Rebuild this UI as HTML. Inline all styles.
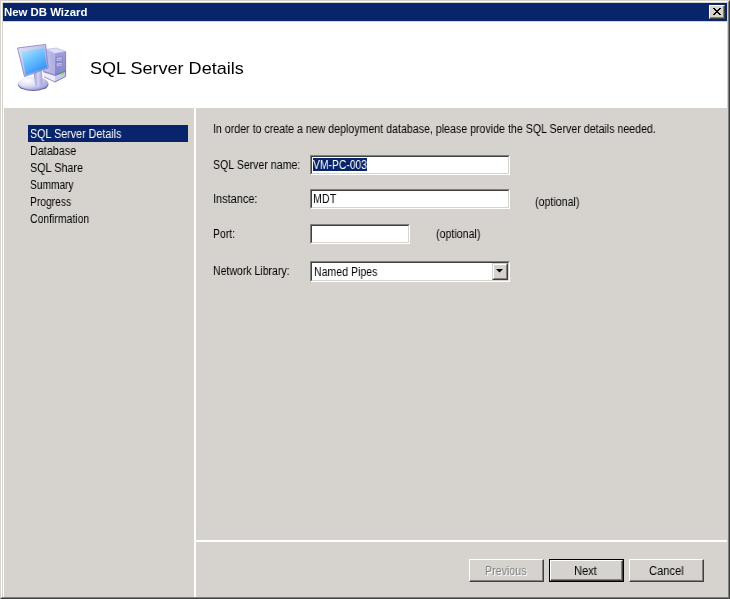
<!DOCTYPE html>
<html><head><meta charset="utf-8"><title>New DB Wizard</title>
<style>
html,body{margin:0;padding:0;}
body{width:730px;height:599px;position:relative;overflow:hidden;background:#d6d3ce;font-family:"Liberation Sans",sans-serif;font-size:12px;color:#000;}
.abs{position:absolute;}
.t{position:absolute;will-change:transform;white-space:nowrap;line-height:14px;transform-origin:0 0;font-size:12px;}
#frame1{left:0;top:0;width:728px;height:597px;border-left:1px solid #d6d3ce;border-top:1px solid #d6d3ce;border-right:1px solid #404040;border-bottom:1px solid #404040;}
#frame2{left:1px;top:1px;width:726px;height:595px;border-left:1px solid #fff;border-top:1px solid #fff;border-right:1px solid #808080;border-bottom:1px solid #808080;}
#title{left:3px;top:3px;width:724px;height:18px;background:#08246b;}
#close{left:706px;top:2px;width:16px;height:14px;background:#d6d3ce;box-sizing:border-box;border-left:1px solid #fff;border-top:1px solid #fff;border-right:1px solid #404040;border-bottom:1px solid #404040;}
#close i{position:absolute;left:0;top:0;right:0;bottom:0;border-right:1px solid #808080;border-bottom:1px solid #808080;}
#client{left:3px;top:22px;width:724px;height:575px;background:#fff;}
#side{left:4px;top:108px;width:190px;height:489px;background:#d6d3ce;}
#main{left:196px;top:108px;width:531px;height:489px;background:#d6d3ce;}
.inp{box-sizing:border-box;background:#fff;border-left:1px solid #808080;border-top:1px solid #808080;border-right:1px solid #fff;border-bottom:1px solid #fff;}
.inp i{position:absolute;left:0;top:0;right:0;bottom:0;border-left:1px solid #404040;border-top:1px solid #404040;border-right:1px solid #d6d3ce;border-bottom:1px solid #d6d3ce;}
.btn{box-sizing:border-box;width:75px;height:23px;background:#d6d3ce;border-left:1px solid #fff;border-top:1px solid #fff;border-right:1px solid #404040;border-bottom:1px solid #404040;}
.btn i{position:absolute;left:0;top:0;right:0;bottom:0;border-right:1px solid #808080;border-bottom:1px solid #808080;}
</style></head><body>
<div id="frame1" class="abs"></div>
<div id="frame2" class="abs"></div>
<div id="title" class="abs">
 <div id="close" class="abs"><i></i>
  <svg class="abs" style="left:3px;top:2px" width="8" height="7" viewBox="0 0 8 7" shape-rendering="crispEdges"><path d="M0 0h2v1h-2zM6 0h2v1h-2zM1 1h2v1h-2zM5 1h2v1h-2zM2 2h4v1h-4zM3 3h2v1h-2zM2 4h4v1h-4zM1 5h2v1h-2zM5 5h2v1h-2zM0 6h2v1h-2zM6 6h2v1h-2z" fill="#000"/></svg>
 </div>
</div>
<div id="client" class="abs"></div>
<!--ICONSTART--><svg class="abs" style="left:12px;top:38px" width="60" height="60" viewBox="12 38 60 60">
<defs>
<linearGradient id="gScr" x1="0.1" y1="0" x2="0.7" y2="1"><stop offset="0" stop-color="#b0e4ff"/><stop offset="0.45" stop-color="#6cc0ff"/><stop offset="1" stop-color="#2c8cfc"/></linearGradient>
<linearGradient id="gFrm" x1="0" y1="0" x2="1" y2="1"><stop offset="0" stop-color="#e4e4fa"/><stop offset="1" stop-color="#9898d8"/></linearGradient>
<radialGradient id="gBase" cx="0.3" cy="0.3" r="0.85"><stop offset="0" stop-color="#ffffff"/><stop offset="0.5" stop-color="#dcdcf4"/><stop offset="1" stop-color="#8c8cd0"/></radialGradient>
<linearGradient id="gNeck" x1="0" y1="0" x2="1" y2="0"><stop offset="0" stop-color="#9494d4"/><stop offset="0.5" stop-color="#d4d4f4"/><stop offset="1" stop-color="#a0a0dc"/></linearGradient>
<linearGradient id="gFront" x1="0" y1="0" x2="0" y2="1"><stop offset="0" stop-color="#a0a0dc"/><stop offset="1" stop-color="#7c7cc4"/></linearGradient>
<linearGradient id="gSide" x1="0" y1="0" x2="1" y2="0"><stop offset="0" stop-color="#c8c8ee"/><stop offset="1" stop-color="#acace0"/></linearGradient>
</defs>
<!-- tower -->
<polygon points="46.5,49.2 56.5,48 65.6,51.5 54.8,53.5" fill="#dedef8" stroke="#a4a4dc" stroke-width="0.5"/>
<polygon points="46.3,49.4 54.8,53.5 55,82 43,72" fill="url(#gSide)"/>
<polygon points="54.8,53.5 65.6,51.5 65.6,76.5 55,82" fill="url(#gFront)"/>
<polygon points="43,70.6 55,74.6 55,76 43.6,72.6" fill="#8c8ccc"/>
<polygon points="43.4,72.3 55,76 55,81.6 44.2,76.6" fill="#ececfb"/>
<polygon points="55,74.6 65.6,70.6 65.6,72 55,76" fill="#7474bc"/>
<polygon points="55,76 65.6,72 65.6,76.3 55,81.6" fill="#c8c8ec"/>
<polygon points="56.2,57.6 62.3,56.6 62.3,60.8 56.2,61.8" fill="#c0c0ea" stroke="#7474bc" stroke-width="0.7"/>
<polygon points="56.2,63 62.3,62 62.3,66.2 56.2,67.2" fill="#c0c0ea" stroke="#7474bc" stroke-width="0.7"/>
<path d="M57.2 59.8 L61.4 59.1 M57.2 65.2 L61.4 64.5" stroke="#8c8ccc" stroke-width="0.8"/>
<ellipse cx="62.6" cy="73.8" rx="1" ry="1.2" fill="#6cec3c"/>
<path d="M65.6 51.5 V76.5 L55 82 L44 76.8" fill="none" stroke="#6464b0" stroke-width="0.7"/>
<!-- base -->
<ellipse cx="33.2" cy="84.4" rx="15.2" ry="6.6" fill="#6464b0"/>
<ellipse cx="33.2" cy="83.3" rx="15" ry="6.6" fill="url(#gBase)"/>
<!-- neck -->
<polygon points="33.5,73 42,70 42.6,84.5 39,86.8 35.5,86" fill="url(#gNeck)"/>
<!-- monitor -->
<polygon points="17.5,48 45.6,44.4 48.2,68 24.5,76.6" fill="url(#gFrm)" stroke="#8080c4" stroke-width="0.8" stroke-linejoin="round"/>
<polygon points="21.5,52 44,48 47,67.4 25.6,75" fill="url(#gScr)"/>
</svg>
<!--ICONEND-->
<div id="side" class="abs"></div>
<div id="main" class="abs"></div>
<div class="abs" style="left:28px;top:125px;width:160px;height:17px;background:#08246b"></div>

<div class="abs inp" style="left:310px;top:155px;width:200px;height:20px"><i></i><div class="abs" style="left:2px;top:2px;width:54px;height:13px;background:#08246b"></div></div>
<div class="abs inp" style="left:310px;top:189px;width:200px;height:20px"><i></i></div>
<div class="abs inp" style="left:310px;top:224px;width:100px;height:20px"><i></i></div>
<div class="abs inp" style="left:310px;top:261px;width:200px;height:21px"><i></i>
 <div class="abs" style="left:181px;top:1px;width:16px;height:17px;background:#d6d3ce;box-sizing:border-box;border-left:1px solid #d6d3ce;border-top:1px solid #d6d3ce;border-right:1px solid #404040;border-bottom:1px solid #404040;">
  <i style="border:0;border-left:1px solid #fff;border-top:1px solid #fff;border-right:1px solid #808080;border-bottom:1px solid #808080;"></i>
  <svg class="abs" style="left:3px;top:5px" width="7" height="4" viewBox="0 0 7 4"><path d="M0 0H7L3.5 3.5Z" fill="#000"/></svg>
 </div>
</div>

<div class="abs" style="left:196px;top:540px;width:531px;height:2px;background:#fff"></div>

<div class="abs btn" style="left:469px;top:559px"><i></i></div>
<div class="abs" style="left:549px;top:559px;width:75px;height:23px;background:#000"></div>
<div class="abs btn" style="left:550px;top:560px;width:73px;height:21px"><i></i></div>
<div class="abs btn" style="left:629px;top:559px"><i></i></div>
<span class="t" id="t_title" style="left:4.2px;top:5px;transform:scaleX(1.0354);color:#fff;font-weight:bold;font-size:11px;">New DB Wizard</span>
<span class="t" id="t_hdr" style="left:89.6px;top:59px;transform:scaleX(1.0615);font-size:17px;line-height:20px;">SQL Server Details</span>
<span class="t" id="t_n1" style="left:29.6px;top:127px;transform:scaleX(0.8942);color:#fff;">SQL Server Details</span>
<span class="t" id="t_n2" style="left:29.6px;top:144px;transform:scaleX(0.9002);">Database</span>
<span class="t" id="t_n3" style="left:29.6px;top:161px;transform:scaleX(0.9);">SQL Share</span>
<span class="t" id="t_n4" style="left:29.6px;top:178px;transform:scaleX(0.8482);">Summary</span>
<span class="t" id="t_n5" style="left:29.6px;top:195px;transform:scaleX(0.8573);">Progress</span>
<span class="t" id="t_n6" style="left:29.6px;top:212px;transform:scaleX(0.8702);">Confirmation</span>
<span class="t" id="t_intro" style="left:213.0px;top:122px;transform:scaleX(0.8859);">In order to create a new deployment database, please provide the SQL Server details needed.</span>
<span class="t" id="t_l1" style="left:212.8px;top:158px;transform:scaleX(0.8814);">SQL Server name:</span>
<span class="t" id="t_l2" style="left:213.0px;top:192px;transform:scaleX(0.9131);">Instance:</span>
<span class="t" id="t_l3" style="left:213.0px;top:227px;transform:scaleX(0.8665);">Port:</span>
<span class="t" id="t_l4" style="left:213.0px;top:264px;transform:scaleX(0.8768);">Network Library:</span>
<span class="t" id="t_o1" style="left:535.2px;top:195px;transform:scaleX(0.8883);">(optional)</span>
<span class="t" id="t_o2" style="left:436.2px;top:227px;transform:scaleX(0.8883);">(optional)</span>
<span class="t" id="t_v1" style="left:313.2px;top:158px;transform:scaleX(0.8616);color:#fff;">VM-PC-003</span>
<span class="t" id="t_v2" style="left:312.8px;top:192px;transform:scaleX(0.8926);">MDT</span>
<span class="t" id="t_v4" style="left:313.6px;top:265px;transform:scaleX(0.8804);">Named Pipes</span>
<span class="t" id="t_b1" style="left:484.6px;top:564px;transform:scaleX(0.8871);color:#808080;text-shadow:1px 1px 0 #fff;">Previous</span>
<span class="t" id="t_b2" style="left:574.0px;top:564px;transform:scaleX(0.9259);">Next</span>
<span class="t" id="t_b3" style="left:648.6px;top:564px;transform:scaleX(0.9281);">Cancel</span>
</body></html>
